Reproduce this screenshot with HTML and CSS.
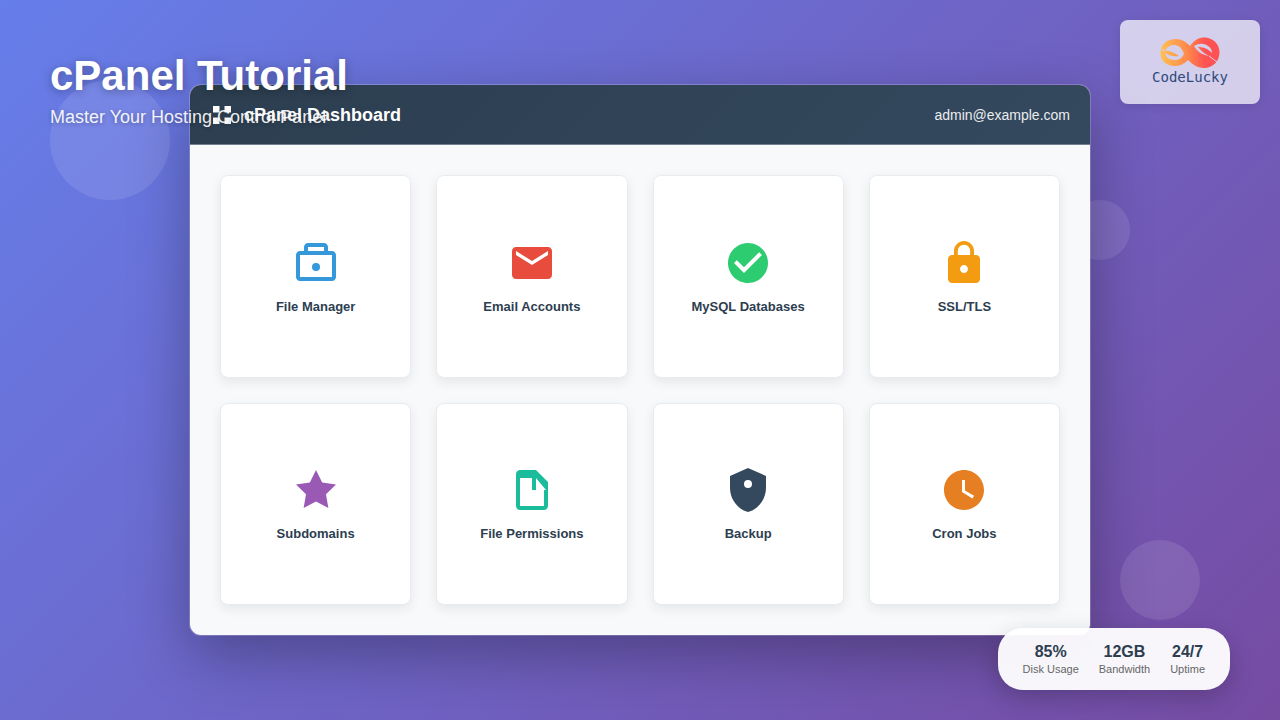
FILE: index.html
```
<!DOCTYPE html>
<html lang="en">
<head>
<meta charset="utf-8">
<title>cPanel Tutorial</title>
<link rel="stylesheet" href="styles.css">
</head>
<body>
<div class="stage">
  <div class="bubble bubble-a"></div>
  <div class="bubble bubble-b"></div>
  <div class="bubble bubble-c"></div>

  <main class="panel">
    <header class="panel-header">
      <div class="brand">
        <svg class="brand-icon" viewBox="0 0 24 24" aria-hidden="true"><path d="M3 3h6.500v6.500H3zM14.500 3H21v6.500h-6.500zM3 14.500h6.500V21H3zM14.500 14.500H21V21h-6.500z"/></svg>
        <h2 class="brand-name">cPanel Dashboard</h2>
      </div>
      <span class="user">admin@example.com</span>
    </header>
    <div class="grid">
      <button class="card" type="button">
        <svg class="card-icon blue" viewBox="0 0 24 24" aria-hidden="true"><path fill-rule="evenodd" d="M20 6h-2V4c0-1.100-.9-2-2-2H8c-1.100 0-2 .9-2 2v2H4c-1.100 0-2 .9-2 2v11c0 1.100.9 2 2 2h16c1.100 0 2-.9 2-2V8c0-1.100-.9-2-2-2zM8 4h8v2H8V4zm12 15H4V8h16v11z"/><circle cx="12" cy="14" r="2"/></svg>
        <span>File Manager</span>
      </button>
      <button class="card" type="button">
        <svg class="card-icon red" viewBox="0 0 24 24" aria-hidden="true"><path d="M20 4H4c-1.100 0-2 .9-2 2v12c0 1.100.9 2 2 2h16c1.100 0 2-.9 2-2V6c0-1.100-.9-2-2-2zm0 4l-8 5-8-5V6l8 5 8-5v2z"/></svg>
        <span>Email Accounts</span>
      </button>
      <button class="card" type="button">
        <svg class="card-icon green" viewBox="0 0 24 24" aria-hidden="true"><path d="M12 2C6.480 2 2 6.480 2 12s4.480 10 10 10 10-4.480 10-10S17.520 2 12 2zm-2 15l-5-5 1.410-1.410L10 14.170l7.590-7.590L19 8l-9 9z"/></svg>
        <span>MySQL Databases</span>
      </button>
      <button class="card" type="button">
        <svg class="card-icon yellow" viewBox="0 0 24 24" aria-hidden="true"><path d="M18 8h-1V6c0-2.760-2.240-5-5-5S7 3.240 7 6v2H6c-1.100 0-2 .9-2 2v10c0 1.100.9 2 2 2h12c1.100 0 2-.9 2-2V10c0-1.100-.9-2-2-2zm-6 9c-1.100 0-2-.9-2-2s.9-2 2-2 2 .9 2 2-.9 2-2 2zm3.100-9H8.900V6c0-1.710 1.390-3.100 3.100-3.100 1.710 0 3.100 1.390 3.100 3.100v2z"/></svg>
        <span>SSL/TLS</span>
      </button>
      <button class="card" type="button">
        <svg class="card-icon purple" viewBox="0 0 24 24" aria-hidden="true"><path d="M12 2l3.090 6.260L22 9.270l-5 4.870 1.180 6.880L12 17.770l-6.180 3.250L7 14.140 2 9.270l6.910-1.010L12 2z"/></svg>
        <span>Subdomains</span>
      </button>
      <button class="card" type="button">
        <svg class="card-icon teal" viewBox="0 0 24 24" aria-hidden="true"><path d="M14 2H6c-1.100 0-2 .9-2 2v16c0 1.100.9 2 2 2h12c1.100 0 2-.9 2-2V8l-6-6zm4 18H6V6h6v6h2V6l5 6h-1v8z"/></svg>
        <span>File Permissions</span>
      </button>
      <button class="card" type="button">
        <svg class="card-icon navy" viewBox="0 0 24 24" aria-hidden="true"><path fill-rule="evenodd" d="M12 1L3 5v6c0 5.550 3.840 10.740 9 12 5.160-1.260 9-6.450 9-12V5l-9-4zm0 6a2 2 0 1 0 0 4 2 2 0 0 0 0-4z"/></svg>
        <span>Backup</span>
      </button>
      <button class="card" type="button">
        <svg class="card-icon orange" viewBox="0 0 24 24" aria-hidden="true"><path d="M12 2C6.500 2 2 6.500 2 12s4.500 10 10 10 10-4.500 10-10S17.500 2 12 2zm4.200 14.200L11 13V7h1.500v5.200l4.500 2.700-.8 1.300z"/></svg>
        <span>Cron Jobs</span>
      </button>
    </div>
  </main>

  <div class="heading">
    <h1 class="title">cPanel Tutorial</h1>
    <p class="subtitle">Master Your Hosting Control Panel</p>
  </div>

  <div class="logo">
    <svg class="logo-mark" viewBox="0 0 60 32" aria-hidden="true">
      <defs><linearGradient id="flame" gradientUnits="userSpaceOnUse" x1="0" y1="0" x2="60" y2="0"><stop offset="0" stop-color="#ffc155"/><stop offset=".45" stop-color="#ff8a4c"/><stop offset=".75" stop-color="#ff5252"/></linearGradient></defs>
      <path fill="url(#flame)" fill-rule="evenodd" d="M.5 16C.5 7 7 2 16 2c6 0 10 3 14 7C34 3 39 .5 44 .5 53 .5 59.500 7 59.500 15.500S53 31 44 31c-7 0-12-4-16-8-4 4-8 6-13 6C6 29 .5 24 .5 16zM6 12c3-4 8-5 12-3 3 1 5 5 6 8-2 4-5 6-9 6-5 0-9-2-10-7 0-1 0-3 1-4zM34 9c5-3 10-3 14 0 3 2 4 4 4 7-4-4-8-6-14-6 3 4 7 7 11 9-6-1-12-4-15-10z"/>
      <path fill="url(#flame)" d="M1 13c7 0 13 2 18 6-6 1-12-1-15-4z"/>
      <path class="logo-cut" d="M0 12l5 2M49 19l8 6"/>
    </svg>
    <span class="logo-name">CodeLucky</span>
  </div>

  <div class="stats">
    <div class="stat"><strong>85%</strong><span>Disk Usage</span></div>
    <div class="stat"><strong>12GB</strong><span>Bandwidth</span></div>
    <div class="stat"><strong>24/7</strong><span>Uptime</span></div>
  </div>
</div>
</body>
</html>
```
FILE: styles.css
```
* { box-sizing: border-box; margin: 0; padding: 0; }
body { font-family: "Liberation Sans", Arial, sans-serif; }
.stage {
  position: relative;
  min-height: 100vh;
  display: flex;
  align-items: center;
  justify-content: center;
  overflow: hidden;
  background: linear-gradient(135deg, #667eea 0%, #764ba2 100%);
}
.bubble { position: absolute; border-radius: 50%; background: rgba(255, 255, 255, .1); }
.bubble-a { width: 120px; height: 120px; left: 50px; top: 80px; }
.bubble-b { width: 60px; height: 60px; right: 150px; top: 200px; }
.bubble-c { width: 80px; height: 80px; right: 80px; bottom: 100px; }

.panel {
  position: relative;
  width: 100%;
  max-width: 902px;
  min-height: 552px;
  display: flex;
  flex-direction: column;
  border: 1px solid rgba(255, 255, 255, .2);
  border-radius: 12px;
  overflow: hidden;
  background: #f8f9fb;
  background-clip: padding-box;
  box-shadow: 0 20px 60px rgba(0, 0, 0, .3);
}
.panel-header {
  display: flex;
  align-items: center;
  justify-content: space-between;
  height: 60px;
  padding: 0 20px;
  border-bottom: 1px solid #71808e;
  color: #fff;
  background: linear-gradient(135deg, #2c3e50, #34495e);
}
.brand { display: flex; align-items: center; gap: 10px; }
.brand-icon { width: 24px; height: 24px; fill: #fff; }
.brand-name { font-size: 18px; line-height: 22px; font-weight: 700; }
.user { font-size: 14px; opacity: .9; }
.grid {
  flex: 1;
  display: grid;
  grid-template-columns: repeat(4, 1fr);
  grid-auto-rows: 1fr;
  gap: 25px;
  padding: 30px;
}
.card {
  display: flex;
  flex-direction: column;
  align-items: center;
  justify-content: center;
  gap: 12px;
  border: 1px solid #e9ecef;
  border-radius: 8px;
  background: #fff;
  color: #2c3e50;
  font: 700 13px/15px "Liberation Sans", Arial, sans-serif;
  box-shadow: 0 4px 12px rgba(0, 0, 0, .08);
}
.card-icon { width: 48px; height: 48px; fill: currentColor; }
.blue { color: #3498db; }
.red { color: #e74c3c; }
.green { color: #2ecc71; }
.yellow { color: #f39c12; }
.purple { color: #9b59b6; }
.teal { color: #1abc9c; }
.navy { color: #34495e; }
.orange { color: #e67e22; }

.heading { position: absolute; left: 50px; top: 50px; color: #fff; }
.title { font-size: 42px; line-height: 52px; text-shadow: 0 2px 8px rgba(0, 0, 0, .3); }
.subtitle { margin-top: 5px; font-size: 18px; line-height: 21px; opacity: .9; text-shadow: 0 1px 4px rgba(0, 0, 0, .3); }

.logo {
  position: absolute;
  top: 20px;
  right: 20px;
  width: 140px;
  min-height: 84px;
  display: flex;
  flex-direction: column;
  align-items: center;
  padding-top: 17px;
  border-radius: 8px;
  background: rgba(255, 255, 255, .7);
  box-shadow: 0 2px 10px rgba(0, 0, 0, .1);
}
.logo-mark { width: 60px; height: 32px; }
.logo-cut { fill: none; stroke: #d5cfec; stroke-width: 1; }
.logo-name { font: 14px/16px "DejaVu Sans Mono", monospace; color: #2d4a7c; }

.stats {
  position: absolute;
  right: 50px;
  bottom: 30px;
  display: flex;
  gap: 20px;
  padding: 14px 25px;
  border-radius: 25px;
  background: rgba(255, 255, 255, .95);
  box-shadow: 0 8px 25px rgba(0, 0, 0, .2);
}
.stat { display: flex; flex-direction: column; align-items: center; gap: 2px; }
.stat strong { font-size: 16px; line-height: 19px; color: #2c3e50; }
.stat span { font-size: 11px; line-height: 13px; color: #666; }
```
